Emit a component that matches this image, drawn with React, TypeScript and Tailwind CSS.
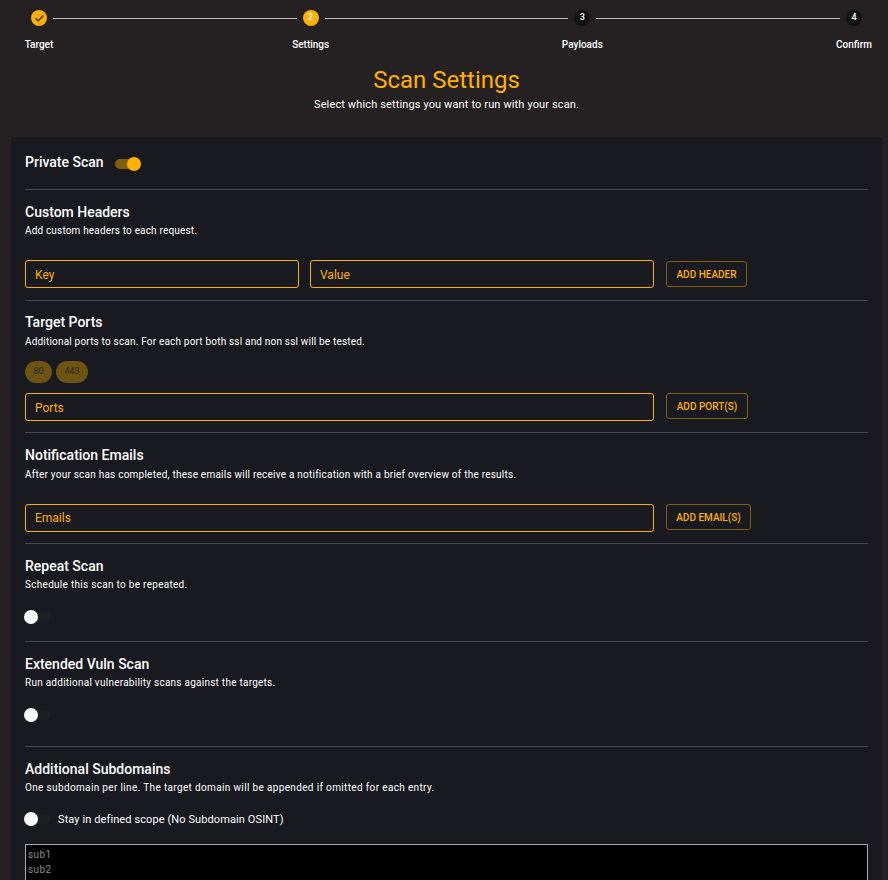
import { Check } from "lucide-react";

const STEPS = ["Target", "Settings", "Payloads", "Confirm"];

function Stepper() {
  return (
    <div>
      <div className="flex items-center pl-[31px] pr-[26px] pt-[10px]">
        <span className="flex h-4 w-4 shrink-0 items-center justify-center rounded-full bg-[#ffb000]">
          <Check size={11} strokeWidth={2.5} className="text-[#252022]" />
        </span>
        <span className="mx-[6px] h-px flex-1 bg-[#bdbdbd]" />
        <span className="flex h-4 w-4 shrink-0 items-center justify-center rounded-full bg-[#ffb000] text-[9px] font-medium text-white">2</span>
        <span className="mx-[6px] h-px flex-1 bg-[#bdbdbd]" />
        <span className="flex h-4 w-4 shrink-0 items-center justify-center rounded-full bg-[#121212] text-[9px] font-medium text-white">3</span>
        <span className="mx-[6px] h-px flex-1 bg-[#bdbdbd]" />
        <span className="flex h-4 w-4 shrink-0 items-center justify-center rounded-full bg-[#121212] text-[9px] font-medium text-white">4</span>
      </div>
      <div className="mt-[12px] flex justify-between pl-[11px] pr-[6px]">
        {STEPS.map((s) => (
          <div key={s} className="w-14 text-center text-[10px] leading-[14px] font-medium text-white">{s}</div>
        ))}
      </div>
    </div>
  );
}

function Toggle({ on }: { on?: boolean }) {
  if (on) {
    return (
      <span className="relative inline-block h-[10px] w-[22px] rounded-full bg-[#7f5f0c]">
        <span className="absolute top-[-2px] right-[-4px] h-[14px] w-[14px] rounded-full bg-[#ffb000]" />
      </span>
    );
  }
  return (
    <span className="relative ml-[3px] inline-block h-[10px] w-[22px] rounded-full bg-[#1e1f22]">
      <span className="absolute top-[-2px] left-[-4px] h-[14px] w-[14px] rounded-full bg-white" />
    </span>
  );
}

function Field({ label, className }: { label: string; className: string }) {
  return (
    <div className={`flex h-[28px] items-center rounded-[3px] border border-[#ffb000] pl-[9px] text-[12px] text-[#ffb000] ${className}`}>
      {label}
    </div>
  );
}

function AddButton({ label, className }: { label: string; className: string }) {
  return (
    <button className={`flex h-[26px] items-center justify-center rounded-[3px] border border-[#7f5f0c] text-[10px] font-medium text-[#ffb000] ${className}`}>
      {label}
    </button>
  );
}

function Heading({ title, desc, descClass }: { title: string; desc: string; descClass: string }) {
  return (
    <div>
      <h3 className="text-[14px] leading-[20px] font-medium text-white">{title}</h3>
      <p className={`text-[10px] leading-[14px] text-white ${descClass}`}>{desc}</p>
    </div>
  );
}

const Divider = () => <div className="h-px bg-[#4a4a4d]" />;

export default function App() {
  return (
    <div className="h-[880px] overflow-hidden bg-[#252022] font-['Roboto',sans-serif]">
      <Stepper />

      <div className="pl-[5px] text-center">
        <h1 className="mt-[12px] text-[24px] leading-[32px] text-[#ffb000]">Scan Settings</h1>
        <p className="mt-[1px] text-[11px] leading-[16px] tracking-[0.13px] text-white">Select which settings you want to run with your scan.</p>
      </div>

      <div className="mt-[24px] mr-[6px] ml-[11px] rounded-t-[2px] bg-[#181a20] px-[14px]">
        <div className="flex h-[52px] items-center pb-[2px]">
          <h3 className="text-[14px] font-medium text-white">Private Scan</h3>
          <span className="mt-[4px] ml-[11px] flex items-center"><Toggle on /></span>
        </div>
        <Divider />

        <div className="pt-[12px] pb-[12px]">
          <Heading title="Custom Headers" desc="Add custom headers to each request." descClass="mt-[2px] tracking-[0.17px]" />
          <div className="mt-[22px] flex items-center">
            <Field label="Key" className="w-[274px] pt-[1px]" />
            <Field label="Value" className="ml-[11px] w-[344px] pt-[1px]" />
            <AddButton label="ADD HEADER" className="ml-[12px] w-[81px]" />
          </div>
        </div>
        <Divider />

        <div className="pt-[11px] pb-[11px]">
          <Heading title="Target Ports" desc="Additional ports to scan. For each port both ssl and non ssl will be tested." descClass="mt-[3px] tracking-[0.19px]" />
          <div className="mt-[12px] flex gap-[4px]">
            <span className="flex h-[22px] w-[27px] items-center justify-center rounded-full bg-[#6e5412] text-[9px] text-[#2d2a1f]">80</span>
            <span className="flex h-[22px] w-[32px] items-center justify-center rounded-full bg-[#6e5412] text-[9px] text-[#2d2a1f]">443</span>
          </div>
          <div className="mt-[10px] flex items-start">
            <Field label="Ports" className="w-[629px] pt-[1px]" />
            <AddButton label="ADD PORT(S)" className="ml-[12px] w-[82px]" />
          </div>
        </div>
        <Divider />

        <div className="pt-[12px] pb-[11px]">
          <Heading title="Notification Emails" desc="After your scan has completed, these emails will receive a notification with a brief overview of the results." descClass="mt-[3px] tracking-[0.23px]" />
          <div className="mt-[22px] flex items-start">
            <Field label="Emails" className="w-[629px]" />
            <AddButton label="ADD EMAIL(S)" className="ml-[12px] w-[85px]" />
          </div>
        </div>
        <Divider />

        <div className="h-[97px] pt-[12px]">
          <Heading title="Repeat Scan" desc="Schedule this scan to be repeated." descClass="mt-[2px] tracking-[0.29px]" />
          <div className="mt-[18px] flex h-[14px] items-center"><Toggle /></div>
        </div>
        <Divider />

        <div className="h-[104px] pt-[12px]">
          <Heading title="Extended Vuln Scan" desc="Run additional vulnerability scans against the targets." descClass="mt-[2px] tracking-[0.25px]" />
          <div className="mt-[18px] flex h-[14px] items-center"><Toggle /></div>
        </div>
        <Divider />

        <div className="pt-[12px]">
          <Heading title="Additional Subdomains" desc="One subdomain per line. The target domain will be appended if omitted for each entry." descClass="mt-[2px] tracking-[0.35px]" />
          <div className="mt-[16px] flex h-[16px] items-center">
            <Toggle />
            <span className="mt-[2px] ml-[8px] text-[11px] tracking-[0.1px] text-white">Stay in defined scope (No Subdomain OSINT)</span>
          </div>
          <div className="mt-[17px] h-[120px] border border-[#a9a9a9] bg-black pt-[2px] pl-[2px] text-[10px] leading-[15px] tracking-[0.4px] text-[#8a8a8a]">
            <div>sub1</div>
            <div>sub2</div>
            <div>sub.domain</div>
          </div>
        </div>
      </div>
    </div>
  );
}
